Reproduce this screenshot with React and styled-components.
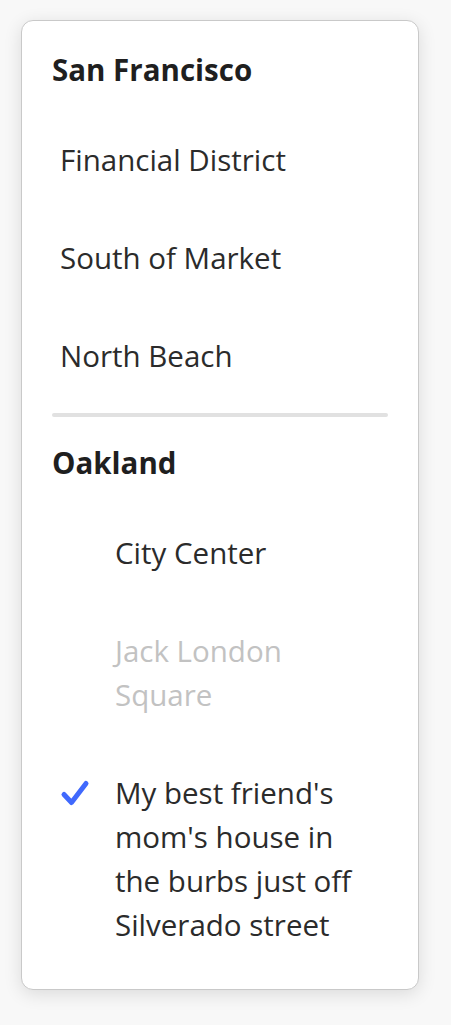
import React from 'react';
import styled, { createGlobalStyle } from 'styled-components';

const GlobalStyle = createGlobalStyle`
html, body {
  margin:0;
  padding:0;
  background:#f8f8f8;
  font-family:"Open Sans", "Noto Sans", sans-serif;
}
`;

const Page = styled.div`
padding:20px 0 36px 21px;
`;

const Menu = styled.div`
box-sizing:border-box;
width:398px;
background:#fff;
border:1px solid #c9c9c9;
border-radius:12px;
box-shadow:0 4px 18px rgba(0, 0, 0, 0.12);
padding:27px 0 15px;
`;

const Section = styled.div`
display:flex;
flex-direction:column;
`;

const Heading = styled.div`
font-size:29.5px;
line-height:44px;
font-weight:700;
color:#1f1f1f;
padding:0 30px;
margin-bottom:19px;
`;

const Item = styled.div`
display:flex;
align-items:flex-start;
padding:27px 39px 27px 38px;
font-size:29.5px;
line-height:44px;
color:${(p) => (p.$disabled ? '#c2c2c2' : '#2b2b2b')};
`;

const CheckSlot = styled.div`
flex:0 0 55px;
height:44px;
display:flex;
align-items:center;
`;

const Label = styled.span`
flex:1;
`;

const Divider = styled.div`
height:4px;
border-radius:2px;
background:#e1e1e1;
margin:8px 30px 24px;
`;

function Check() {
  return (
    <svg width="30" height="28" viewBox="0 0 30 28">
      <path
        d="M4 15.5 L11.5 23.5 L26 4.5"
        fill="none"
        stroke="#4069fd"
        strokeWidth="5"
        strokeLinecap="round"
        strokeLinejoin="round"
      />
    </svg>
  );
}

const sf = ['Financial District', 'South of Market', 'North Beach'];

const oakland = [
  { name: 'City Center' },
  { name: 'Jack London Square', disabled: true },
  { name: "My best friend's mom's house in the burbs just off Silverado street", checked: true },
];

export default function App() {
  return (
    <Page>
      <GlobalStyle />
      <Menu>
        <Section>
          <Heading>San Francisco</Heading>
          {sf.map((n) => (
            <Item key={n}>
              <Label>{n}</Label>
            </Item>
          ))}
        </Section>
        <Divider />
        <Section>
          <Heading>Oakland</Heading>
          {oakland.map((o) => (
            <Item key={o.name} $disabled={o.disabled}>
              <CheckSlot>{o.checked && <Check />}</CheckSlot>
              <Label>{o.name}</Label>
            </Item>
          ))}
        </Section>
      </Menu>
    </Page>
  );
}
